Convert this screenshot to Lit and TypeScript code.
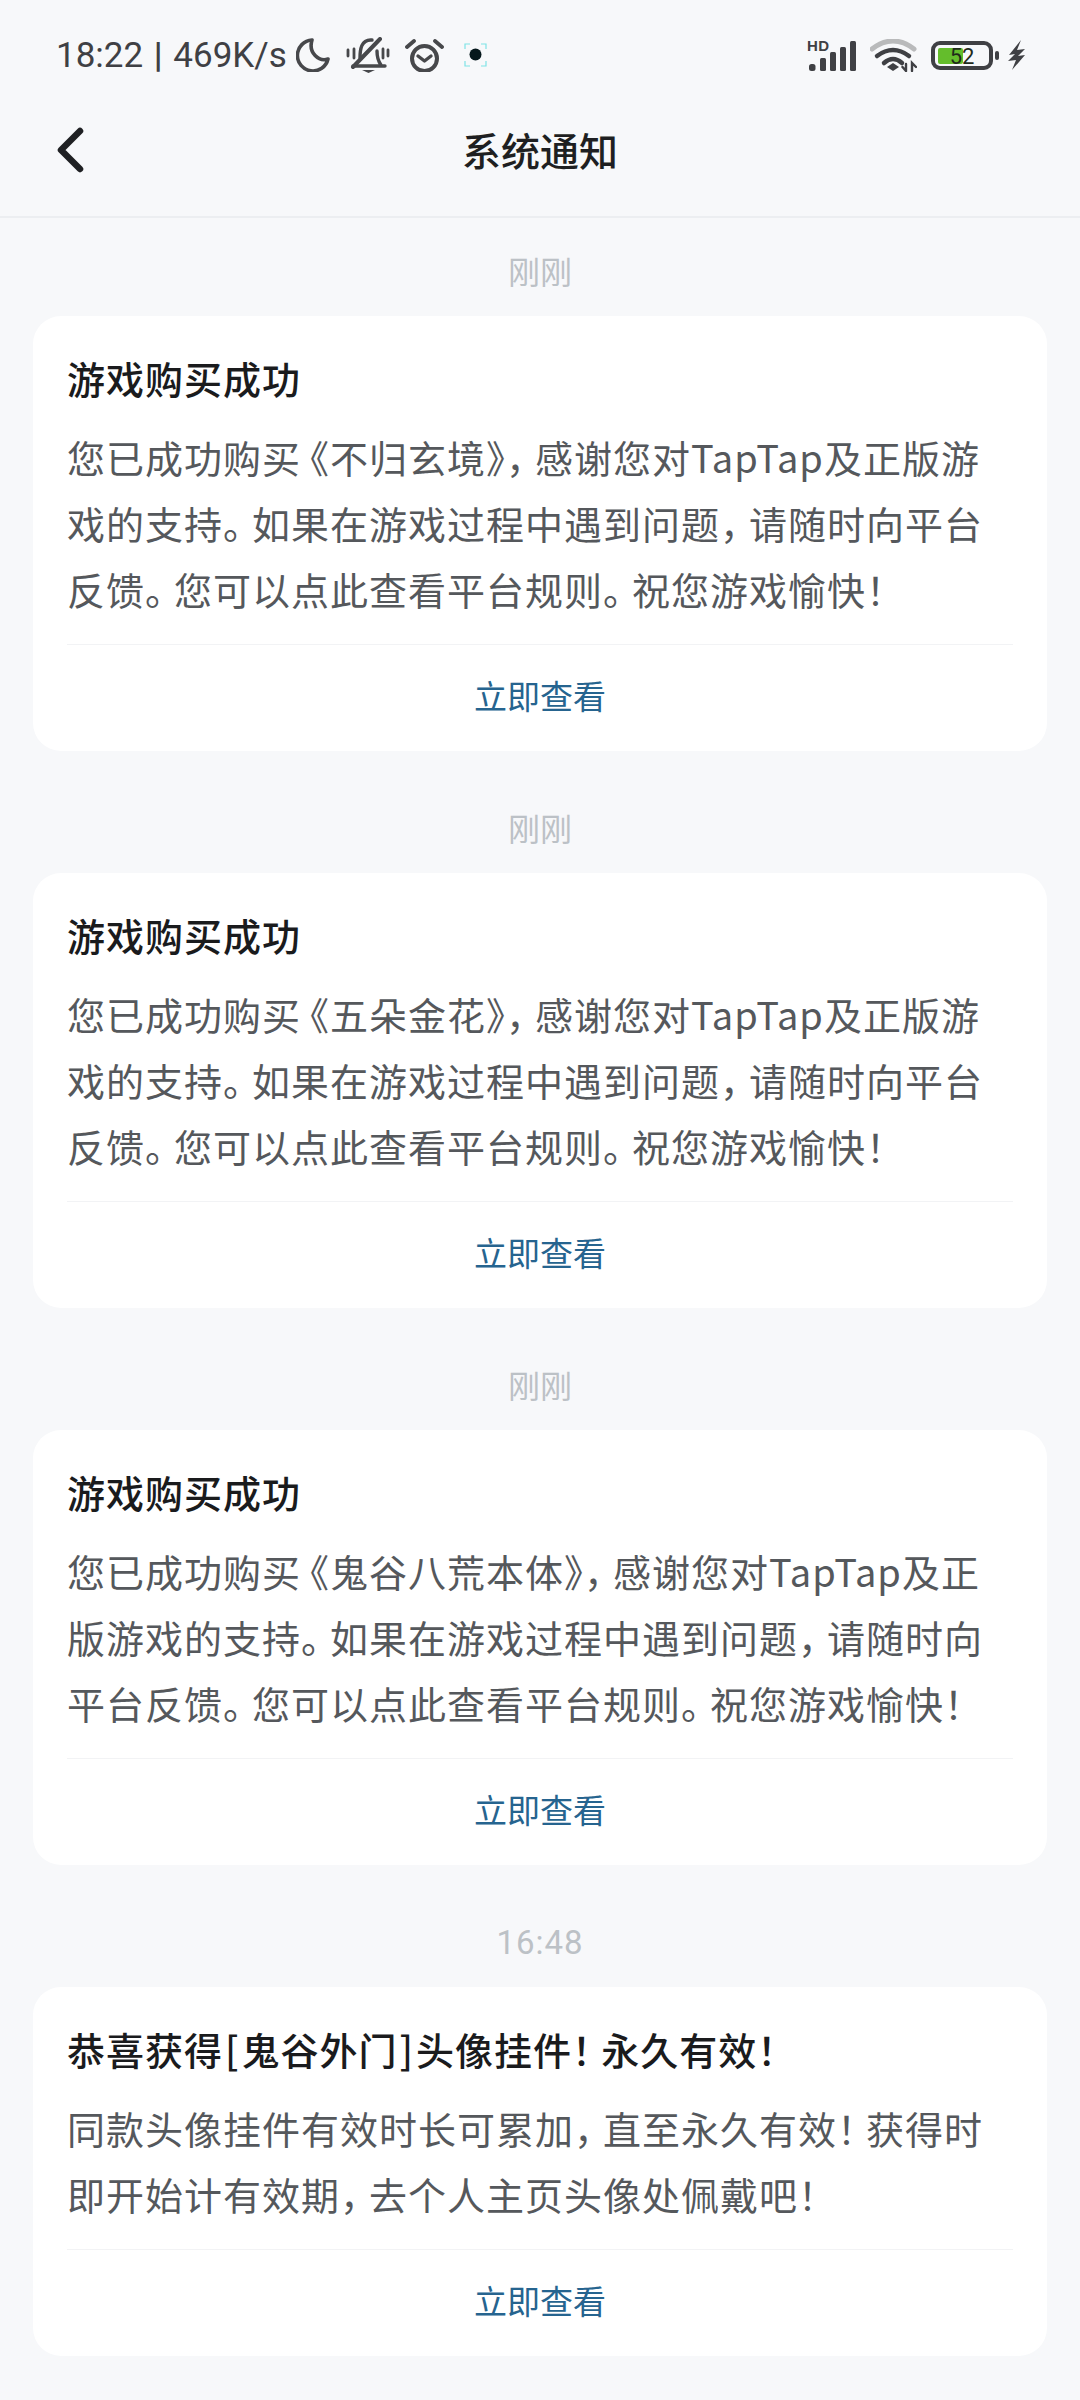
import { LitElement, html, css } from "lit";
import { customElement } from "lit/decorators.js";

interface Note { time: string; title: string; body: string; }
const tail = "感谢您对TapTap及正版游戏的支持。如果在游戏过程中遇到问题，请随时向平台反馈。您可以点此查看平台规则。祝您游戏愉快！";
const notes: Note[] = [
  { time: "刚刚", title: "游戏购买成功", body: "您已成功购买《不归玄境》，" + tail },
  { time: "刚刚", title: "游戏购买成功", body: "您已成功购买《五朵金花》，" + tail },
  { time: "刚刚", title: "游戏购买成功", body: "您已成功购买《鬼谷八荒本体》，" + tail },
  { time: "16:48", title: "恭喜获得[鬼谷外门]头像挂件！永久有效！", body: "同款头像挂件有效时长可累加，直至永久有效！获得时即开始计有效期，去个人主页头像处佩戴吧！" },
];

// The reference's font sets CJK punctuation narrower than a full em.
function punct(s: string) {
  return s.split(/([，。！《\[\]])/).map(part =>
    part === "《" ? html`<span class="open">${part}</span>`
    : part === "[" || part === "]" ? html`<span class="bracket">${part}</span>`
    : /^[，。！]$/.test(part) ? html`<span class="close">${part}</span>`
    : part);
}

@customElement("app-root")
export class AppRoot extends LitElement {
  static styles = css`
    :host { display: block; width: 1080px; height: 2400px; overflow: hidden; background: #f7f8fa;
      font-family: "Noto Sans CJK SC", "Noto Sans", sans-serif; }
    svg { display: block; flex: none; }
    .status { height: 84px; box-sizing: border-box; padding: 26px 55px 0 56px; display: flex; align-items: center; color: #3f4044; }
    .status > div { height: 58px; display: flex; align-items: center; }
    .clock { font-family: Roboto, sans-serif; font-size: 35px; word-spacing: 2px; white-space: nowrap; color: #3f4044; }
    .clock b { font-weight: 700; }
    .right { margin-left: auto; }
    .moon { margin-left: 9px; }
    .bell { margin-left: 16px; }
    .alarm { margin-left: 15px; }
    .lens { margin-left: 20px; }
    .wifi { margin-left: 13px; }
    .battery { margin-left: 14px; }
    .bolt { margin-left: 9px; }
    .nav { height: 134px; box-sizing: border-box; padding-bottom: 5px; display: flex; align-items: center; justify-content: center; position: relative; box-shadow: inset 0 -2px 0 #eceef1; }
    .back { position: absolute; left: 56px; top: 41px; }
    .nav h1 { margin: 0; font-size: 39px; font-weight: 500; color: #1e1f21; }
    .list { display: flex; flex-direction: column; align-items: center; }
    .time { height: 98px; line-height: 105px; font-size: 32px; color: #bcc1c6; }
    .time.num { font-family: Roboto, sans-serif; font-size: 33px; letter-spacing: 1px; line-height: 107px; }
    .card { width: 1014px; box-sizing: border-box; background: #fff; border-radius: 28px; padding: 37px 34px 0; margin-bottom: 24px; }
    .title { font-size: 38px; line-height: 50px; font-weight: 500; color: #1a1b1d; letter-spacing: 1px; white-space: nowrap; }
    .body { margin-top: 21px; font-size: 38px; line-height: 66px; color: #55585c; letter-spacing: 1px; }
    .open { font-feature-settings: "halt"; padding-left: 9px; }
    .close { font-feature-settings: "halt"; padding-right: 9px; }
    .bracket { padding: 0 2px; }
    .rule { height: 1px; background: #f2f3f5; margin-top: 22px; }
    .action { height: 106px; line-height: 100px; text-align: center; font-size: 33px; color: #26648f; }
  `;
  render() {
    return html`
      <div class="status">
        <div class="left">
          <span class="clock">18:22 <b>|</b> 469K/s</span>
          <svg class="moon" width="34" height="34" viewBox="0 0 34 34" fill="none" stroke="#47484b" stroke-width="3.6" stroke-linejoin="round"><path d="M16 2A15.5 15.5 0 1 0 32 21C23 24 12 15 16 2Z"/></svg>
          <svg class="bell" width="44" height="36" viewBox="0 0 44 36" fill="none" stroke="#47484b" stroke-width="3.4" stroke-linecap="round" stroke-linejoin="round"><path d="M7 29h32M31 14c0 6 1 10 4 14M14 21c0-8 1-19 12-18"/><path d="M34 2 7 30" stroke-width="4"/><path d="M16 33h13l-6.500 3z" fill="#47484b" stroke="none"/><path d="M2 13v6M8 12v9M37 12v9M42 13v6" stroke-width="2.800"/></svg>
          <svg class="alarm" width="39" height="33" viewBox="0 0 39 33" fill="none" stroke="#47484b" stroke-linecap="round" stroke-linejoin="round"><circle cx="19.500" cy="19.500" r="12.500" stroke-width="4"/><path d="M13 17l6.500 5 6.500-5" stroke-width="3.400"/><path d="M2 8l7-6M30 2l7 6" stroke-width="3.800"/></svg>
          <svg class="lens" width="23" height="24" viewBox="0 0 23 24" fill="none" stroke="#7fe3e6" stroke-width="1.200"><path d="M1 6V1h5M17 1h5v5M22 18v5h-5M6 23H1v-5"/><circle cx="11.500" cy="11.500" r="6" fill="#06181c" stroke="none"/></svg>
        </div>
        <div class="right">
          <svg width="50" height="31" viewBox="0 0 50 31"><text x="0" y="11" font-family="Liberation Sans" font-weight="700" font-size="15" letter-spacing="0.500" fill="#3f4044">HD</text><g fill="#3f4044"><rect x="2" y="24" width="6.500" height="7" rx="2.500"/><rect x="13" y="18" width="6" height="13" rx="1.500"/><rect x="23" y="12" width="6" height="19" rx="1.500"/><rect x="33" y="7" width="6" height="24" rx="1.500"/><rect x="43" y="1" width="6" height="30" rx="1.500"/></g></svg>
          <svg class="wifi" width="47" height="33" viewBox="0 0 47 33" fill="none" stroke-linecap="round"><path d="M2 10Q23-6 44 10" stroke="#b9babb" stroke-width="5"/><path d="M7 17Q23 5 39 17" stroke="#3f4044" stroke-width="4.500"/><path d="M14 24Q23 16 32 24" stroke="#3f4044" stroke-width="4.500"/><path d="M17 28l6-4 6 4-6 4z" fill="#3f4044"/><path d="M36 25v7M32.500 28l3.500 4M42 32v-8l4 4" stroke="#3f4044" stroke-width="2.400"/></svg>
          <svg class="battery" width="68" height="29" viewBox="0 0 68 29"><rect x="2" y="2" width="58" height="25" rx="7" fill="none" stroke="#3f4044" stroke-width="4"/><rect x="7" y="7" width="25" height="16" rx="2" fill="#64bd2c"/><text x="31" y="23" text-anchor="middle" font-family="Roboto" font-size="22" fill="#1f2a1a">52</text><rect x="64" y="10" width="4" height="9" rx="2" fill="#3f4044"/></svg>
          <svg class="bolt" width="17" height="30" viewBox="0 0 17 30"><path d="M13 0 1 15l6-1-7 7 8-1-4 10 13-15-7 1 7-7-8 1z" fill="#3f4044"/></svg>
        </div>
      </div>
      <div class="nav">
        <svg class="back" width="28" height="50" viewBox="0 0 28 50" fill="none" stroke="#1f2023" stroke-width="6.500" stroke-linecap="round" stroke-linejoin="round"><path d="M24 6 5 25l19 19"/></svg>
        <h1>系统通知</h1>
      </div>
      <div class="list">
        ${notes.map(n => html`
          <div class="time ${/\d/.test(n.time) ? "num" : ""}">${n.time}</div>
          <div class="card">
            <div class="title">${punct(n.title)}</div>
            <div class="body">${punct(n.body)}</div>
            <div class="rule"></div>
            <div class="action">立即查看</div>
          </div>`)}
      </div>
    `;
  }
}
